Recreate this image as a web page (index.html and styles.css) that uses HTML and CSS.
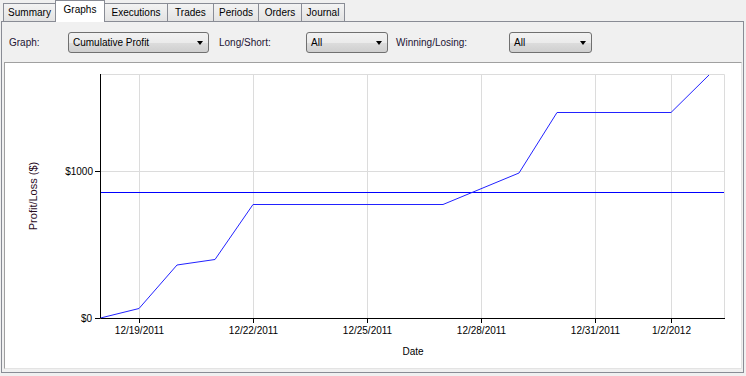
FILE: index.html
```html
<!DOCTYPE html>
<html lang="en">
<head>
	<meta charset="UTF-8">
	<title>Graphs</title>
	<link rel="stylesheet" href="styles.css">
</head>
<body>
	<!-- 选项卡 -->
	<div class="tabs">
		<div class="tab tab-summary">Summary</div>
		<div class="tab tab-graphs active">Graphs</div>
		<div class="tab tab-executions">Executions</div>
		<div class="tab tab-trades">Trades</div>
		<div class="tab tab-periods">Periods</div>
		<div class="tab tab-orders">Orders</div>
		<div class="tab tab-journal">Journal</div>
	</div>
	<div class="panel">
		<!-- 筛选条件 -->
		<div class="toolbar">
			<label class="lbl lbl-graph">Graph:</label>
			<div class="combo combo-graph"><span>Cumulative Profit</span><i class="arrow"></i></div>
			<label class="lbl lbl-side">Long/Short:</label>
			<div class="combo combo-small"><span>All</span><i class="arrow"></i></div>
			<label class="lbl lbl-win">Winning/Losing:</label>
			<div class="combo combo-small combo-last"><span>All</span><i class="arrow"></i></div>
		</div>
		<!-- 图表 -->
		<div class="chart">
			<svg width="735" height="305" viewBox="5 63 735 305">
				<g class="grid">
					<path d="M139.5 75V318M253.5 75V318M367.5 75V318M481.5 75V318M595.5 75V318M671.5 75V318"/>
					<path d="M101 171.5H724"/>
					<path d="M101 74.5H724.5V318"/>
				</g>
				<line class="avg" x1="101" y1="192.5" x2="724" y2="192.5"/>
				<polyline class="series" points="100.5,318 139,308.5 177,265 215,259.5 253,204.5 443,204.5 519,173 557,112.5 671,112.5 709,75"/>
				<g class="axis">
					<path d="M100.5 74V318.5H725"/>
					<path d="M95 171.5H100M95 318.5H100M139.5 318V323M253.5 318V323M367.5 318V323M481.5 318V323M595.5 318V323M671.5 318V323"/>
				</g>
				<g class="labels">
					<text x="93" y="175" text-anchor="end">$1000</text>
					<text x="92" y="322" text-anchor="end">$0</text>
					<text x="139.5" y="334" text-anchor="middle">12/19/2011</text>
					<text x="253.5" y="334" text-anchor="middle">12/22/2011</text>
					<text x="367.5" y="334" text-anchor="middle">12/25/2011</text>
					<text x="481.5" y="334" text-anchor="middle">12/28/2011</text>
					<text x="595.5" y="334" text-anchor="middle">12/31/2011</text>
					<text x="671.5" y="334" text-anchor="middle">1/2/2012</text>
					<text x="413" y="355" text-anchor="middle">Date</text>
					<text class="ytitle" transform="translate(37 196) rotate(-90)" text-anchor="middle">Profit/Loss ($)</text>
				</g>
			</svg>
		</div>
	</div>
</body>
</html>
```

FILE: styles.css
```css
body {
	margin: 0;
	padding: 0;
	background-color: #F0F0F0;
	font-family: "Liberation Sans", Arial, sans-serif;
	font-size: 10px;
	color: #000;
}

.tabs {
	display: flex;
	align-items: flex-end;
	height: 21px;
	padding-left: 3px;
}

.tab {
	height: 18px;
	box-sizing: border-box;
	margin-right: -1px;
	border: 1px solid #898C95;
	border-bottom: none;
	background: linear-gradient(#F3F3F3, #E3E3E3);
	line-height: 17px;
	text-align: center;
}

.tab.active {
	position: relative;
	z-index: 1;
	height: 22px;
	margin-bottom: -1px;
	background: #FFF;
	line-height: 18px;
}

.tab-summary { width: 53px; }
.tab-graphs { width: 50px; }
.tab-executions { width: 64px; }
.tab-trades { width: 47px; }
.tab-periods { width: 46px; }
.tab-orders { width: 44px; }
.tab-journal { width: 44px; }

.panel {
	width: 743px;
	height: 352px;
	margin-left: 1px;
	box-sizing: border-box;
	border: 1px solid #898C95;
	background-color: #F0F0F0;
}

.toolbar {
	display: flex;
	align-items: center;
	height: 40px;
	padding-left: 7px;
	padding-top: 1px;
	box-sizing: border-box;
}

.lbl {
	color: #1C1434;
}

.lbl-graph { width: 59px; }
.lbl-side { width: 87px; margin-left: 10px; }
.lbl-win { width: 113px; margin-left: 8px; }

.combo {
	display: flex;
	align-items: center;
	height: 21px;
	padding: 0 5px 0 4px;
	box-sizing: border-box;
	border: 1px solid #707070;
	border-radius: 3px;
	background: linear-gradient(#F2F2F2 0%, #EBEBEB 50%, #DDDDDD 50%, #CFCFCF 100%);
}

.combo-graph { width: 141px; }
.combo-small { width: 82px; }
.combo-last { width: 83px; }

.arrow {
	margin-left: auto;
	width: 0;
	height: 0;
	border-left: 3.5px solid transparent;
	border-right: 3.5px solid transparent;
	border-top: 4px solid #000;
}

.chart {
	height: 307px;
	margin: 0 1px 3px 2px;
	box-sizing: border-box;
	border: 1px solid;
	border-color: #A0A0A0 #E3E3E3 #E3E3E3 #A0A0A0;
	background-color: #FFF;
}

.chart svg {
	display: block;
}

.grid path {
	fill: none;
	stroke: #DCDCDC;
	stroke-width: 1;
}

.axis path {
	fill: none;
	stroke: #000;
	stroke-width: 1;
}

.avg {
	stroke: #0000FF;
	stroke-width: 1;
}

.series {
	fill: none;
	stroke: #2222FF;
	stroke-width: 1;
}

.labels text {
	font-family: "Liberation Sans", Arial, sans-serif;
	font-size: 10px;
	fill: #000;
}

.labels .ytitle {
	font-size: 11px;
	fill: #2A0C1E;
}
```
